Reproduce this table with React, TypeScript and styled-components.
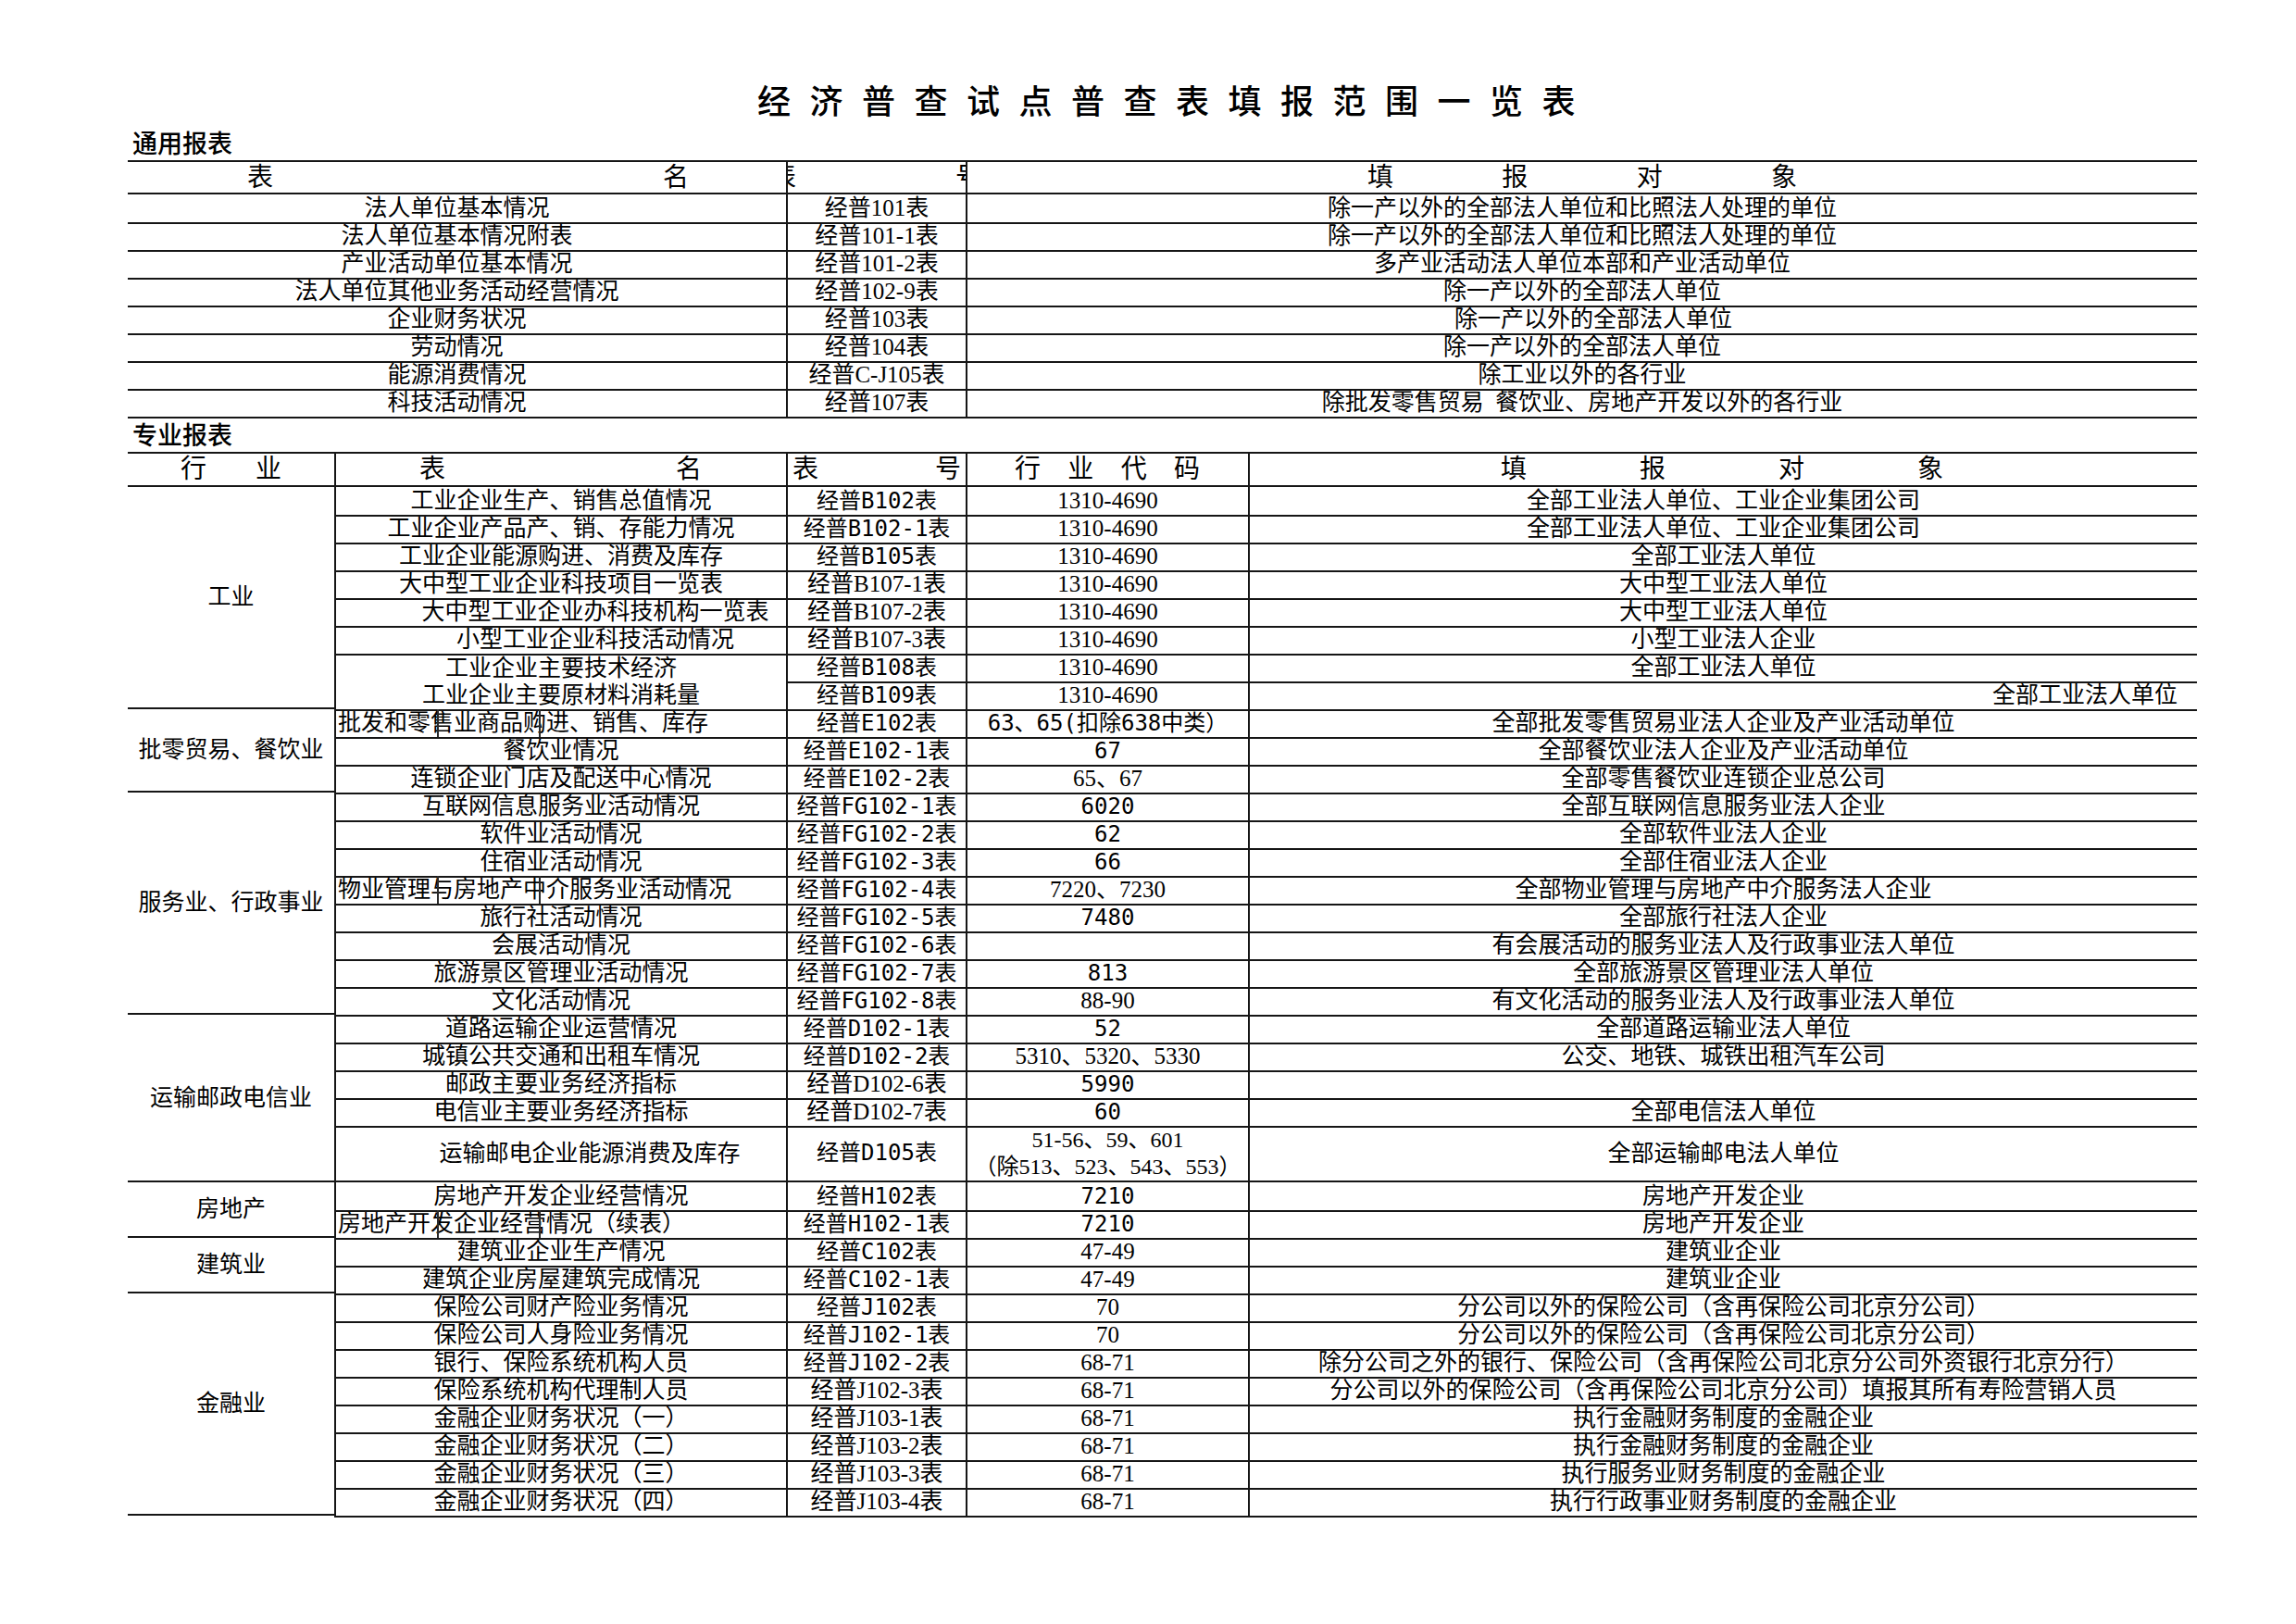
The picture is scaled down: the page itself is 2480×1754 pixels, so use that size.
import styled, { createGlobalStyle } from "styled-components";

// fonts: serif for the sheet body, mono for the "B102"-style codes, hei for headings
const SERIF = `"Liberation Serif", "Noto Sans CJK SC", serif`;
const MONO = `"DejaVu Sans Mono", "Noto Sans CJK SC", monospace`;
const HEI = `"Noto Sans CJK SC", "Liberation Sans", sans-serif`;
const LINE = "#161616";

const GlobalStyle = createGlobalStyle`
  html, body {
    margin: 0;
    padding: 0;
    background: #ffffff;
  }
  body {
    width: 2480px;
    height: 1754px;
    overflow: hidden;
    color: #000;
    font-family: ${SERIF};
  }
`;

const Page = styled.div`
  box-sizing: border-box;
  width: 2480px;
  padding-left: 138px;
`;

const Sheet = styled.div`
  width: 2235px;
`;

const Title = styled.h1`
  box-sizing: border-box;
  margin: 0;
  height: 135px;
  padding: 85px 0 0 29px;
  font: 500 36px/44px ${HEI};
  letter-spacing: 20.5px;
  text-align: center;
  white-space: nowrap;
`;

const SectionLabel = styled.div`
  height: 38px;
  padding-left: 5px;
  font: 500 27px/38px ${HEI};
`;

const Table = styled.div`
  border-top: 2px solid ${LINE};
`;

const GenRow = styled.div<{ $h: number }>`
  display: grid;
  grid-template-columns: 711px 194px 1330px;
  height: ${(p) => p.$h}px;
`;

const SpecRow = styled.div<{ $h: number }>`
  display: grid;
  grid-template-columns: 488px 194px 305px 1fr;
  height: ${(p) => p.$h}px;
`;

type Align = "left" | "center" | "right";
const justify = { left: "flex-start", center: "center", right: "flex-end" };

const Cell = styled.div<{
  $first?: boolean;
  $open?: boolean;
  $align?: Align;
  $mono?: boolean;
  $pl?: number;
  $pr?: number;
}>`
  position: relative;
  box-sizing: border-box;
  display: flex;
  align-items: center;
  justify-content: ${(p) => justify[p.$align || "center"]};
  padding-left: ${(p) => p.$pl || 0}px;
  padding-right: ${(p) => p.$pr || 0}px;
  border-bottom: ${(p) => (p.$open ? "none" : `2px solid ${LINE}`)};
  border-left: ${(p) => (p.$first ? "none" : `2px solid ${LINE}`)};
  font-family: ${(p) => (p.$mono ? MONO : SERIF)};
  font-size: ${(p) => (p.$mono ? 24 : 25)}px;
  line-height: 1.2;
  white-space: nowrap;
`;

// header cells clip their spread-out captions like the spreadsheet does
const HeadCell = styled(Cell)`
  justify-content: flex-start;
  overflow: hidden;
`;

const Spread = styled.div<{ $w: number; $ml?: number }>`
  flex: none;
  display: flex;
  justify-content: space-between;
  width: ${(p) => p.$w}px;
  margin-left: ${(p) => p.$ml || 0}px;
  font: 28px/1.2 ${SERIF};
`;

// thin borders of hidden merged cells that show through some long names
const GhostLine = styled.span<{ $x: number }>`
  position: absolute;
  top: 0;
  bottom: 0;
  left: ${(p) => p.$x}px;
  width: 1.5px;
  background: #2a2a2a;
`;

const Stack = styled.div`
  display: flex;
  flex-direction: column;
  align-items: center;
  line-height: 29px;
  font-size: 24px;
`;

const Group = styled.div`
  display: flex;
`;

const IndustryCell = styled.div`
  box-sizing: border-box;
  flex: none;
  width: 223px;
  display: flex;
  align-items: center;
  justify-content: center;
  border-bottom: 2px solid ${LINE};
  font: 25px/1.2 ${SERIF};
  white-space: nowrap;
`;

const GroupRows = styled.div`
  flex: 1;
  display: flex;
  flex-direction: column;
`;

type GenItem = { name: string; code: string; obj: string; objShift?: number };

const generalRows: GenItem[] = [
  { name: "法人单位基本情况", code: "经普101表", obj: "除一产以外的全部法人单位和比照法人处理的单位" },
  { name: "法人单位基本情况附表", code: "经普101-1表", obj: "除一产以外的全部法人单位和比照法人处理的单位" },
  { name: "产业活动单位基本情况", code: "经普101-2表", obj: "多产业活动法人单位本部和产业活动单位" },
  { name: "法人单位其他业务活动经营情况", code: "经普102-9表", obj: "除一产以外的全部法人单位" },
  { name: "企业财务状况", code: "经普103表", obj: "除一产以外的全部法人单位", objShift: 12 },
  { name: "劳动情况", code: "经普104表", obj: "除一产以外的全部法人单位" },
  { name: "能源消费情况", code: "经普C-J105表", obj: "除工业以外的各行业" },
  { name: "科技活动情况", code: "经普107表", obj: "除批发零售贸易\u2002餐饮业、房地产开发以外的各行业" },
];

type SpecItem = {
  name: string;
  shift?: number;
  split?: boolean;
  open?: boolean;
  code: string;
  codeMono?: boolean;
  ind: string | string[];
  indMono?: boolean;
  obj: string;
  objRight?: boolean;
  h?: number;
};

type SpecGroup = { industry: string; rows: SpecItem[] };

const IND = "1310-4690";
const INS = "分公司以外的保险公司（含再保险公司北京分公司）";

const groups: SpecGroup[] = [
  {
    industry: "工业",
    rows: [
      { name: "工业企业生产、销售总值情况", code: "经普B102表", codeMono: true, ind: IND, obj: "全部工业法人单位、工业企业集团公司" },
      { name: "工业企业产品产、销、存能力情况", code: "经普B102-1表", codeMono: true, ind: IND, obj: "全部工业法人单位、工业企业集团公司" },
      { name: "工业企业能源购进、消费及库存", code: "经普B105表", codeMono: true, ind: IND, obj: "全部工业法人单位" },
      { name: "大中型工业企业科技项目一览表", code: "经普B107-1表", ind: IND, obj: "大中型工业法人单位" },
      { name: "大中型工业企业办科技机构一览表", shift: 37, code: "经普B107-2表", ind: IND, obj: "大中型工业法人单位" },
      { name: "小型工业企业科技活动情况", shift: 37, code: "经普B107-3表", ind: IND, obj: "小型工业法人企业" },
      { name: "工业企业主要技术经济", open: true, code: "经普B108表", codeMono: true, ind: IND, obj: "全部工业法人单位" },
      { name: "工业企业主要原材料消耗量", code: "经普B109表", codeMono: true, ind: IND, obj: "全部工业法人单位", objRight: true },
    ],
  },
  {
    industry: "批零贸易、餐饮业",
    rows: [
      { name: "批发和零售业商品购进、销售、库存", split: true, code: "经普E102表", codeMono: true, ind: "63、65(扣除638中类）", indMono: true, obj: "全部批发零售贸易业法人企业及产业活动单位" },
      { name: "餐饮业情况", code: "经普E102-1表", codeMono: true, ind: "67", indMono: true, obj: "全部餐饮业法人企业及产业活动单位" },
      { name: "连锁企业门店及配送中心情况", code: "经普E102-2表", codeMono: true, ind: "65、67", obj: "全部零售餐饮业连锁企业总公司" },
    ],
  },
  {
    industry: "服务业、行政事业",
    rows: [
      { name: "互联网信息服务业活动情况", code: "经普FG102-1表", codeMono: true, ind: "6020", indMono: true, obj: "全部互联网信息服务业法人企业" },
      { name: "软件业活动情况", code: "经普FG102-2表", codeMono: true, ind: "62", indMono: true, obj: "全部软件业法人企业" },
      { name: "住宿业活动情况", code: "经普FG102-3表", codeMono: true, ind: "66", indMono: true, obj: "全部住宿业法人企业" },
      { name: "物业管理与房地产中介服务业活动情况", split: true, code: "经普FG102-4表", codeMono: true, ind: "7220、7230", obj: "全部物业管理与房地产中介服务法人企业" },
      { name: "旅行社活动情况", code: "经普FG102-5表", codeMono: true, ind: "7480", indMono: true, obj: "全部旅行社法人企业" },
      { name: "会展活动情况", code: "经普FG102-6表", codeMono: true, ind: "", obj: "有会展活动的服务业法人及行政事业法人单位" },
      { name: "旅游景区管理业活动情况", code: "经普FG102-7表", codeMono: true, ind: "813", indMono: true, obj: "全部旅游景区管理业法人单位" },
      { name: "文化活动情况", code: "经普FG102-8表", codeMono: true, ind: "88-90", obj: "有文化活动的服务业法人及行政事业法人单位" },
    ],
  },
  {
    industry: "运输邮政电信业",
    rows: [
      { name: "道路运输企业运营情况", code: "经普D102-1表", codeMono: true, ind: "52", indMono: true, obj: "全部道路运输业法人单位" },
      { name: "城镇公共交通和出租车情况", code: "经普D102-2表", codeMono: true, ind: "5310、5320、5330", obj: "公交、地铁、城铁出租汽车公司" },
      { name: "邮政主要业务经济指标", code: "经普D102-6表", ind: "5990", indMono: true, obj: "" },
      { name: "电信业主要业务经济指标", code: "经普D102-7表", ind: "60", indMono: true, obj: "全部电信法人单位" },
      { name: "运输邮电企业能源消费及库存", shift: 31, code: "经普D105表", codeMono: true, ind: ["51-56、59、601", "（除513、523、543、553）"], obj: "全部运输邮电法人单位", h: 61 },
    ],
  },
  {
    industry: "房地产",
    rows: [
      { name: "房地产开发企业经营情况", code: "经普H102表", codeMono: true, ind: "7210", indMono: true, obj: "房地产开发企业" },
      { name: "房地产开发企业经营情况（续表）", split: true, code: "经普H102-1表", codeMono: true, ind: "7210", indMono: true, obj: "房地产开发企业" },
    ],
  },
  {
    industry: "建筑业",
    rows: [
      { name: "建筑业企业生产情况", code: "经普C102表", codeMono: true, ind: "47-49", obj: "建筑业企业" },
      { name: "建筑企业房屋建筑完成情况", code: "经普C102-1表", codeMono: true, ind: "47-49", obj: "建筑业企业" },
    ],
  },
  {
    industry: "金融业",
    rows: [
      { name: "保险公司财产险业务情况", code: "经普J102表", codeMono: true, ind: "70", obj: INS },
      { name: "保险公司人身险业务情况", code: "经普J102-1表", codeMono: true, ind: "70", obj: INS },
      { name: "银行、保险系统机构人员", code: "经普J102-2表", codeMono: true, ind: "68-71", obj: "除分公司之外的银行、保险公司（含再保险公司北京分公司外资银行北京分行）" },
      { name: "保险系统机构代理制人员", code: "经普J102-3表", ind: "68-71", obj: INS + "填报其所有寿险营销人员" },
      { name: "金融企业财务状况（一）", code: "经普J103-1表", ind: "68-71", obj: "执行金融财务制度的金融企业" },
      { name: "金融企业财务状况（二）", code: "经普J103-2表", ind: "68-71", obj: "执行金融财务制度的金融企业" },
      { name: "金融企业财务状况（三）", code: "经普J103-3表", ind: "68-71", obj: "执行服务业财务制度的金融企业" },
      { name: "金融企业财务状况（四）", code: "经普J103-4表", ind: "68-71", obj: "执行行政事业财务制度的金融企业" },
    ],
  },
];

const NameCell = ({ row }: { row: SpecItem }) => {
  if (row.split) {
    return (
      <Cell $align="left" $pl={2}>
        {row.name}
        <GhostLine $x={109} />
        <GhostLine $x={219} />
      </Cell>
    );
  }
  return (
    <Cell $open={row.open} $pl={(row.shift || 0) * 2}>
      {row.name}
    </Cell>
  );
};

const SpecLine = ({ row }: { row: SpecItem }) => (
  <SpecRow $h={row.h || 30}>
    <NameCell row={row} />
    <Cell $mono={row.codeMono}>{row.code}</Cell>
    <Cell $mono={row.indMono}>
      {Array.isArray(row.ind) ? (
        <Stack>
          {row.ind.map((t) => (
            <span key={t}>{t}</span>
          ))}
        </Stack>
      ) : (
        row.ind
      )}
    </Cell>
    <Cell $align={row.objRight ? "right" : "center"} $pr={row.objRight ? 21 : 0}>
      {row.obj}
    </Cell>
  </SpecRow>
);

const spread = (text: string) => text.split("").map((c, i) => <span key={i}>{c}</span>);

export default function App() {
  return (
    <Page>
      <GlobalStyle />
      <Sheet>
        <Title>经济普查试点普查表填报范围一览表</Title>

        <SectionLabel>通用报表</SectionLabel>
        <Table>
          <GenRow $h={35}>
            <HeadCell $first $pl={129}>
              <Spread $w={477}>{spread("表名")}</Spread>
            </HeadCell>
            <HeadCell>
              <Spread $w={228} $ml={-19}>
                {spread("表号")}
              </Spread>
            </HeadCell>
            <HeadCell $pl={432}>
              <Spread $w={464}>{spread("填报对象")}</Spread>
            </HeadCell>
          </GenRow>
          {generalRows.map((r) => (
            <GenRow $h={30} key={r.name}>
              <Cell $first>{r.name}</Cell>
              <Cell>{r.code}</Cell>
              <Cell $pl={(r.objShift || 0) * 2}>{r.obj}</Cell>
            </GenRow>
          ))}
        </Table>

        <SectionLabel>专业报表</SectionLabel>
        <Table>
          <Group>
            <IndustryCell>
              <Spread $w={109}>{spread("行业")}</Spread>
            </IndustryCell>
            <GroupRows>
              <SpecRow $h={36}>
                <HeadCell $pl={90}>
                  <Spread $w={305}>{spread("表名")}</Spread>
                </HeadCell>
                <HeadCell $pl={5}>
                  <Spread $w={182}>{spread("表号")}</Spread>
                </HeadCell>
                <HeadCell $pl={51}>
                  <Spread $w={200}>{spread("行业代码")}</Spread>
                </HeadCell>
                <HeadCell $pl={271}>
                  <Spread $w={478}>{spread("填报对象")}</Spread>
                </HeadCell>
              </SpecRow>
            </GroupRows>
          </Group>
          {groups.map((g) => (
            <Group key={g.industry}>
              <IndustryCell>{g.industry}</IndustryCell>
              <GroupRows>
                {g.rows.map((r) => (
                  <SpecLine row={r} key={r.name + r.code} />
                ))}
              </GroupRows>
            </Group>
          ))}
        </Table>
      </Sheet>
    </Page>
  );
}
